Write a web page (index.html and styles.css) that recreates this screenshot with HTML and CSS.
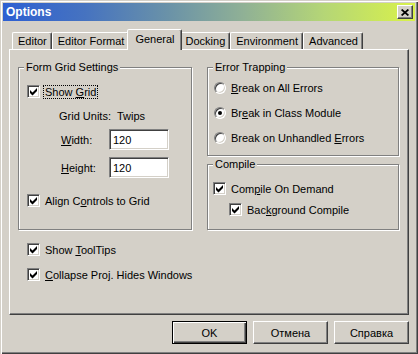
FILE: index.html
```html
<!DOCTYPE html>
<html lang="en">

<head>
    <meta charset="UTF-8">
    <meta name="viewport" content="width=device-width, initial-scale=1.0">
    <title>Options</title>
    <link rel="stylesheet" href="styles.css">
</head>

<body>
    <div class="window">
        <div class="titlebar">
            <span class="title">Options</span>
            <span class="close-btn">
                <svg width="8" height="7" viewBox="0 0 8 7">
                    <path d="M0.6 0.5 L7.4 6.5 M7.4 0.5 L0.6 6.5" stroke="#000" stroke-width="1.7" fill="none" />
                </svg>
            </span>
        </div>

        <div class="dialog-body">
            <div class="tabs">
                <div class="tab">Editor</div>
                <div class="tab">Editor Format</div>
                <div class="tab active">General</div>
                <div class="tab">Docking</div>
                <div class="tab">Environment</div>
                <div class="tab">Advanced</div>
            </div>

            <div class="tab-panel">
                <div class="top-row">
                    <div class="group grid-group">
                        <span class="group-title">Form Grid Settings</span>
                        <div class="check-row">
                            <span class="check"><svg width="11" height="11" viewBox="0 0 11 11"><path d="M2 4 L4.5 6.5 L9 2 L9 5 L4.5 9.5 L2 7 Z" fill="#000" /></svg></span>
                            <span class="label focused">Show <u>G</u>rid</span>
                        </div>
                        <div class="grid-units">Grid Units:<span class="units">Twips</span></div>
                        <div class="field-row">
                            <span class="field-label"><u>W</u>idth:</span>
                            <input class="textbox" type="text" value="120">
                        </div>
                        <div class="field-row field-row-second">
                            <span class="field-label"><u>H</u>eight:</span>
                            <input class="textbox" type="text" value="120">
                        </div>
                        <div class="check-row align-row">
                            <span class="check"><svg width="11" height="11" viewBox="0 0 11 11"><path d="M2 4 L4.5 6.5 L9 2 L9 5 L4.5 9.5 L2 7 Z" fill="#000" /></svg></span>
                            <span class="label">Align C<u>o</u>ntrols to Grid</span>
                        </div>
                    </div>

                    <div class="right-col">
                        <div class="group error-group">
                            <span class="group-title">Error Trapping</span>
                            <div class="check-row">
                                <span class="radio"></span>
                                <span class="label"><u>B</u>reak on All Errors</span>
                            </div>
                            <div class="check-row radio-row">
                                <span class="radio checked"></span>
                                <span class="label">Br<u>e</u>ak in Class Module</span>
                            </div>
                            <div class="check-row radio-row">
                                <span class="radio"></span>
                                <span class="label">Break on Unhandled <u>E</u>rrors</span>
                            </div>
                        </div>

                        <div class="group compile-group">
                            <span class="group-title">Compile</span>
                            <div class="check-row">
                                <span class="check"><svg width="11" height="11" viewBox="0 0 11 11"><path d="M2 4 L4.5 6.5 L9 2 L9 5 L4.5 9.5 L2 7 Z" fill="#000" /></svg></span>
                                <span class="label">Com<u>p</u>ile On Demand</span>
                            </div>
                            <div class="check-row sub-row">
                                <span class="check"><svg width="11" height="11" viewBox="0 0 11 11"><path d="M2 4 L4.5 6.5 L9 2 L9 5 L4.5 9.5 L2 7 Z" fill="#000" /></svg></span>
                                <span class="label">Bac<u>k</u>ground Compile</span>
                            </div>
                        </div>
                    </div>
                </div>

                <div class="check-row bottom-row">
                    <span class="check"><svg width="11" height="11" viewBox="0 0 11 11"><path d="M2 4 L4.5 6.5 L9 2 L9 5 L4.5 9.5 L2 7 Z" fill="#000" /></svg></span>
                    <span class="label">Show <u>T</u>oolTips</span>
                </div>
                <div class="check-row bottom-row-second">
                    <span class="check"><svg width="11" height="11" viewBox="0 0 11 11"><path d="M2 4 L4.5 6.5 L9 2 L9 5 L4.5 9.5 L2 7 Z" fill="#000" /></svg></span>
                    <span class="label"><u>C</u>ollapse Proj. Hides Windows</span>
                </div>
            </div>

            <div class="buttons">
                <button class="btn default">OK</button>
                <button class="btn">Отмена</button>
                <button class="btn">Справка</button>
            </div>
        </div>
    </div>
</body>

</html>
```

FILE: styles.css
```css
* {
    box-sizing: border-box;
}

body {
    margin: 0;
    background-color: #d4d0c8;
    font-family: "Liberation Sans", Arial, sans-serif;
    font-size: 11px;
    color: #000;
}

.window {
    width: 418px;
    height: 354px;
    padding: 3px;
    background-color: #d4d0c8;
    box-shadow: inset 1px 1px #d4d0c8, inset 2px 2px #fff, inset -1px -1px #404040, inset -2px -2px #808080;
}

.titlebar {
    height: 18px;
    display: flex;
    align-items: center;
    justify-content: space-between;
    padding: 0 2px 0 3px;
    background: linear-gradient(to right, #2d5fd2 0%, #4673c0 20%, #6a92a8 40%, #8fb096 58%, #b5d676 78%, #d9f24a 100%);
}

.title {
    color: #fff;
    font-weight: bold;
    font-size: 12px;
}

.close-btn {
    width: 16px;
    height: 14px;
    display: flex;
    align-items: center;
    justify-content: center;
    background-color: #d4d0c8;
    border: 1px solid;
    border-color: #fff #404040 #404040 #fff;
    box-shadow: inset -1px -1px #808080;
}

.dialog-body {
    padding: 8px 6px 7px 6px;
}

.tabs {
    display: flex;
    align-items: flex-end;
    height: 20px;
    padding-left: 3px;
}

.tab {
    height: 17px;
    display: flex;
    align-items: center;
    padding: 0 4px 0 5px;
    border: 1px solid;
    border-bottom: 0;
    border-color: #fff #404040 transparent #fff;
    border-radius: 2px 2px 0 0;
    box-shadow: inset -1px 0 #808080;
}

.tab.active {
    position: relative;
    z-index: 1;
    height: 21px;
    margin: 0 -2px -1px -2px;
    padding: 0 6px 2px 7px;
    background-color: #d4d0c8;
}

.tab-panel {
    height: 266px;
    padding: 17px 9px 0 8px;
    border: 1px solid;
    border-color: #fff #404040 #404040 #fff;
    box-shadow: inset -1px -1px #808080;
}

.top-row {
    display: flex;
    gap: 15px;
}

.group {
    position: relative;
    border: 1px solid #808080;
    box-shadow: inset 1px 1px #fff, 1px 1px #fff;
}

.group-title {
    position: absolute;
    top: -7px;
    left: 5px;
    padding: 0 2px;
    line-height: 13px;
    background-color: #d4d0c8;
}

.grid-group {
    width: 174px;
    height: 163px;
    padding: 17px 0 0 8px;
}

.right-col {
    width: 192px;
}

.error-group {
    height: 89px;
    padding: 13px 0 0 6px;
}

.compile-group {
    height: 66px;
    margin-top: 8px;
    padding: 17px 0 0 5px;
}

.check-row {
    display: flex;
    align-items: center;
    height: 13px;
}

.radio-row {
    margin-top: 12px;
}

.sub-row {
    margin-top: 8px;
    padding-left: 16px;
}

.align-row {
    margin-top: 16px;
}

.bottom-row {
    margin-top: 13px;
    padding-left: 9px;
}

.bottom-row-second {
    margin-top: 12px;
    padding-left: 9px;
}

.check {
    width: 13px;
    height: 13px;
    flex-shrink: 0;
    border: 1px solid;
    border-color: #808080 #fff #fff #808080;
    box-shadow: inset 1px 1px #404040, inset -1px -1px #d4d0c8;
    background-color: #fff;
}

.check svg {
    display: block;
}

.radio {
    width: 12px;
    height: 12px;
    flex-shrink: 0;
    display: flex;
    align-items: center;
    justify-content: center;
    border: 1px solid;
    border-color: #808080 #fff #fff #808080;
    border-radius: 50%;
    box-shadow: inset 1px 1px #404040, inset -1px -1px #d4d0c8;
    background-color: #fff;
}

.radio.checked::after {
    content: "";
    width: 4px;
    height: 4px;
    border-radius: 50%;
    background-color: #000;
}

.label {
    margin-left: 3px;
    padding: 0 1px;
    border: 1px dotted transparent;
    line-height: 12px;
    white-space: nowrap;
}

.label.focused {
    border-color: #000;
}

.grid-units {
    margin-top: 12px;
    padding-left: 32px;
    line-height: 13px;
}

.units {
    margin-left: 6px;
}

.field-row {
    display: flex;
    align-items: center;
    margin-top: 6px;
    padding-left: 34px;
}

.field-row-second {
    margin-top: 7px;
}

.field-label {
    width: 48px;
}

.textbox {
    width: 60px;
    height: 21px;
    margin: 0;
    padding: 0 3px;
    font-family: inherit;
    font-size: 11px;
    color: #000;
    border: 1px solid;
    border-color: #808080 #fff #fff #808080;
    box-shadow: inset 1px 1px #404040, inset -1px -1px #d4d0c8;
    background-color: #fff;
    outline: none;
}

.buttons {
    display: flex;
    justify-content: flex-end;
    gap: 6px;
    margin-top: 6px;
}

.btn {
    width: 75px;
    height: 23px;
    margin: 0;
    padding: 0;
    font-family: inherit;
    font-size: 11px;
    color: #000;
    background-color: #d4d0c8;
    border: 1px solid;
    border-color: #fff #404040 #404040 #fff;
    box-shadow: inset -1px -1px #808080;
}

.btn.default {
    border-color: #000;
    box-shadow: inset 1px 1px #fff, inset -1px -1px #404040, inset -2px -2px #808080;
}
```
